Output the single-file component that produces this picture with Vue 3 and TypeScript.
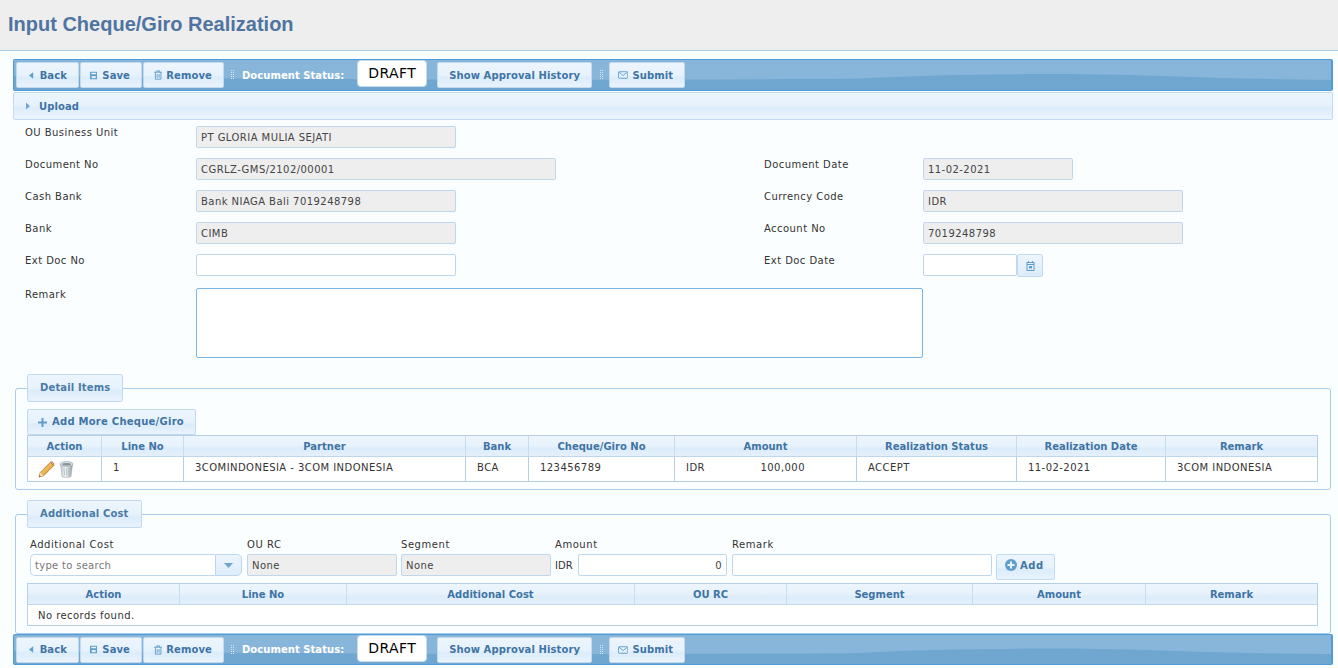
<script setup lang="ts">
const leftFields = [
  { label: 'OU Business Unit', value: 'PT GLORIA MULIA SEJATI', cls: 'w260', rightLabel: '', rightValue: '', rightCls: '' },
  { label: 'Document No', value: 'CGRLZ-GMS/2102/00001', cls: 'w360', rightLabel: 'Document Date', rightValue: '11-02-2021', rightCls: 'w150' },
  { label: 'Cash Bank', value: 'Bank NIAGA Bali 7019248798', cls: 'w260', rightLabel: 'Currency Code', rightValue: 'IDR', rightCls: 'w260' },
  { label: 'Bank', value: 'CIMB', cls: 'w260', rightLabel: 'Account No', rightValue: '7019248798', rightCls: 'w260' },
]
const detailCols = [
  { t: 'Action', w: 74 }, { t: 'Line No', w: 82 }, { t: 'Partner', w: 282 }, { t: 'Bank', w: 63 },
  { t: 'Cheque/Giro No', w: 146 }, { t: 'Amount', w: 182 }, { t: 'Realization Status', w: 160 },
  { t: 'Realization Date', w: 149 }, { t: 'Remark', w: 151 },
]
const costCols = [
  { t: 'Action', w: 152 }, { t: 'Line No', w: 167 }, { t: 'Additional Cost', w: 288 }, { t: 'OU RC', w: 152 },
  { t: 'Segment', w: 186 }, { t: 'Amount', w: 173 }, { t: 'Remark', w: 171 },
]
const toolbars = ['top', 'bottom']
</script>

<template>
  <div class="page">
    <header class="title-bar"><h1>Input Cheque/Giro Realization</h1></header>
    <main class="main">
      <template v-for="bar in toolbars" :key="bar">
        <div v-if="bar === 'bottom'" class="content">
          <div class="panel">
            <svg width="6" height="8" viewBox="0 0 6 8"><path d="M1 0.5 5 4 1 7.5z" fill="#6fa6d0" /></svg>
            <span>Upload</span>
          </div>
          <div class="form">
            <template v-for="f in leftFields" :key="f.label">
              <label>{{ f.label }}</label>
              <div><div class="input ro" :class="f.cls">{{ f.value }}</div></div>
              <label>{{ f.rightLabel }}</label>
              <div><div v-if="f.rightValue" class="input ro" :class="f.rightCls">{{ f.rightValue }}</div></div>
            </template>
            <label>Ext Doc No</label>
            <div><div class="input w260"></div></div>
            <label>Ext Doc Date</label>
            <div class="date">
              <div class="input w94"></div>
              <button class="cal" type="button">
                <svg width="9" height="10" viewBox="0 0 9 10" fill="none" stroke="#5f9dcb">
                  <rect x="1" y="1.500" width="7" height="8" />
                  <path d="M2.500 0v2M6.500 0v2M1 3.500h7" />
                  <rect x="3" y="5" width="3" height="2.500" fill="#5f9dcb" stroke="none" />
                </svg>
              </button>
            </div>
            <label class="remark-label">Remark</label>
            <div class="remark-wrap"><div class="textarea"></div></div>
          </div>

          <fieldset class="group first">
            <legend>Detail Items</legend>
            <button class="btn add-more" type="button">
              <svg width="9" height="9" viewBox="0 0 9 9"><path d="M3.500 0h2v3.500H9v2H5.500V9h-2V5.500H0v-2h3.500z" fill="#5f9dcb" /></svg>
              <span>Add More Cheque/Giro</span>
            </button>
            <table class="grid">
              <colgroup><col v-for="c in detailCols" :key="c.t" :style="{ width: c.w + 'px' }" /></colgroup>
              <thead><tr><th v-for="c in detailCols" :key="c.t">{{ c.t }}</th></tr></thead>
              <tbody>
                <tr class="line">
                  <td class="actions">
                    <svg width="17" height="17" viewBox="0 0 17 17">
                      <defs>
                        <linearGradient id="pen" x1="0" y1="0" x2="1" y2="1">
                          <stop offset="0" stop-color="#fbe08a" />
                          <stop offset="1" stop-color="#d98a1e" />
                        </linearGradient>
                      </defs>
                      <path d="M12.500 1.200 15.800 4.500 5.600 14.700 1 16l1.300-4.600z" fill="url(#pen)" stroke="#a9701c" stroke-width=".8" />
                      <path d="M12.500 1.200c1-.8 1.800-.6 2.500.1s.9 1.600.8 3.200z" fill="#e8a0a0" stroke="#a9701c" stroke-width=".6" />
                      <path d="M2.300 11.400 5.600 14.700 1 16z" fill="#f3dcb8" />
                      <path d="M1 16l.5-1.800 1.300 1.300z" fill="#5a4020" />
                    </svg>
                    <svg width="15" height="17" viewBox="0 0 15 17">
                      <defs>
                        <linearGradient id="can" x1="0" y1="0" x2="1" y2="0">
                          <stop offset="0" stop-color="#c3ccd1" />
                          <stop offset=".45" stop-color="#f0f3f4" />
                          <stop offset="1" stop-color="#8e9aa1" />
                        </linearGradient>
                      </defs>
                      <path d="M1.500 3.500 3 15.500c1.500 1.200 7.500 1.200 9 0l1.500-12z" fill="url(#can)" stroke="#a5b0b6" stroke-width=".6" />
                      <ellipse cx="7.500" cy="3" rx="6.500" ry="2.400" fill="#dfe5e8" stroke="#9aa6ad" stroke-width=".7" />
                      <ellipse cx="7.500" cy="3.200" rx="4.500" ry="1.300" fill="#87939a" />
                      <path d="M5 7l.6 7M7.500 7v7.500M10 7l-.6 7" stroke="#a9b4ba" stroke-width=".7" />
                    </svg>
                  </td>
                  <td>1</td>
                  <td>3COMINDONESIA - 3COM INDONESIA</td>
                  <td>BCA</td>
                  <td>123456789</td>
                  <td><span class="money"><span>IDR</span><span>100,000</span></span></td>
                  <td>ACCEPT</td>
                  <td>11-02-2021</td>
                  <td>3COM INDONESIA</td>
                </tr>
              </tbody>
            </table>
          </fieldset>

          <fieldset class="group second">
            <legend>Additional Cost</legend>
            <div class="cost-form">
              <div class="cell">
                <span class="cap">Additional Cost</span>
                <div class="combo">
                  <div class="combo-input">type to search</div>
                  <button class="combo-btn" type="button">
                    <svg width="9" height="5" viewBox="0 0 9 5"><path d="M0 0h9L4.500 5z" fill="#6fa6d0" /></svg>
                  </button>
                </div>
              </div>
              <div class="cell"><span class="cap">OU RC</span><div class="input ro full">None</div></div>
              <div class="cell"><span class="cap">Segment</span><div class="input ro full">None</div></div>
              <div class="cell">
                <span class="cap">Amount</span>
                <div class="amount"><span>IDR</span><div class="input num">0</div></div>
              </div>
              <div class="cell"><span class="cap">Remark</span><div class="input full"></div></div>
              <div class="cell add-cell">
                <button class="btn add" type="button">
                  <svg width="12" height="12" viewBox="0 0 12 12">
                    <circle cx="6" cy="6" r="6" fill="#5f9fce" />
                    <path d="M5 2.500h2V5h2.500v2H7v2.500H5V7H2.500V5H5z" fill="#eaf4fd" />
                  </svg>
                  Add
                </button>
              </div>
            </div>
            <table class="grid">
              <colgroup><col v-for="c in costCols" :key="c.t" :style="{ width: c.w + 'px' }" /></colgroup>
              <thead><tr><th v-for="c in costCols" :key="c.t">{{ c.t }}</th></tr></thead>
              <tbody><tr class="empty"><td :colspan="costCols.length">No records found.</td></tr></tbody>
            </table>
          </fieldset>
        </div>

        <div class="toolbar" :class="bar">
          <svg class="wave" viewBox="0 0 1320 32" preserveAspectRatio="none">
            <path d="M0 17C300 21 560 22 840 20 950 14 1050 14 1150 17 1230 20 1290 21 1320 21V32H0z" fill="#6fa7d1" />
          </svg>
          <button class="btn b-back" type="button">
            <svg width="5" height="7" viewBox="0 0 5 7"><path d="M4.500 0v7L0 3.500z" fill="#5f9dcb" /></svg>
            Back
          </button>
          <button class="btn b-save" type="button">
            <svg width="9" height="9" viewBox="0 0 9 9" fill="#5f9dcb">
              <path d="M0 0h9v9H0zM1.500 1v2h6V1zM2 5v3h5V5z" fill-rule="evenodd" />
            </svg>
            Save
          </button>
          <button class="btn b-remove" type="button">
            <svg width="9" height="10" viewBox="0 0 9 10" fill="none" stroke="#5f9dcb">
              <path d="M0 2h9M3 2V.5h3V2M1.500 2v7.500h6V2M3.500 4v4M5.500 4v4" />
            </svg>
            Remove
          </button>
          <span class="grip first-grip"></span>
          <span class="status-label">Document Status:</span>
          <span class="status">DRAFT</span>
          <button class="btn history" type="button">Show Approval History</button>
          <span class="grip second-grip"></span>
          <button class="btn b-submit" type="button">
            <svg width="11" height="8" viewBox="0 0 11 8" fill="none" stroke="#5f9dcb">
              <rect x=".5" y=".5" width="10" height="7" rx="1" />
              <path d="M1 1l4.500 3.500L10 1" />
            </svg>
            Submit
          </button>
        </div>
      </template>
    </main>
  </div>
</template>

<style>
html, body { margin: 0; background: #fbfefe; overflow: hidden; }
</style>

<style scoped>
.page { font-family: "DejaVu Sans", Verdana, sans-serif; font-size: 10px; letter-spacing: .45px; color: #333; }
.title-bar { height: 50px; background: #eeeeee; border-bottom: 1px solid #a9cde9; display: flex; align-items: center; padding-left: 8px; }
h1 { margin: 0 0 1px; font: bold 20px "Liberation Sans", Arial, sans-serif; letter-spacing: 0; color: #4f74a1; }
.main { padding: 8px 5px 0 13px; }
.toolbar { position: relative; height: 32px; box-sizing: border-box; display: flex; align-items: center; padding: 0 0 0 2px; gap: 1px;
  background: #88b6da; border: 1px solid #4d9bd8; border-width: 1px 2px 1px 1px; border-radius: 2px; }
.toolbar.top { margin-bottom: 1px; }
.toolbar.bottom { height: 31px; }
.wave { position: absolute; inset: 0; width: 100%; height: 100%; }
.btn { position: relative; height: 26px; box-sizing: border-box; padding: 0 11px; display: inline-flex; align-items: center; gap: 6px;
  font: bold 10px "DejaVu Sans", Verdana, sans-serif; letter-spacing: .1px; color: #3f74a5;
  background: linear-gradient(#edf5fd 0, #e7f2fc 50%, #dcecfa 62%, #e9f3fd 100%); border: 1px solid #c2daef; border-radius: 2px; }
.b-back { width: 63px; padding-left: 12px; }
.b-save { width: 62px; padding-left: 9px; gap: 5px; }
.b-remove { width: 81px; padding-left: 10px; gap: 4px; }
.history { width: 155px; }
.b-submit { width: 76px; padding-left: 8px; gap: 4px; }
.grip { position: relative; width: 3px; height: 10px; background: #d4e6f5;
  -webkit-mask-image: linear-gradient(#000 50%, transparent 50%), linear-gradient(90deg, #000 1px, transparent 1px);
  -webkit-mask-size: 100% 2px, 2px 100%;
  -webkit-mask-composite: source-in;
  mask-image: linear-gradient(#000 50%, transparent 50%), linear-gradient(90deg, #000 1px, transparent 1px);
  mask-size: 100% 2px, 2px 100%;
  mask-composite: intersect; }
.first-grip { margin: 0 7px 0 6px; }
.status-label { position: relative; font-weight: bold; letter-spacing: .05px; color: #fff; }
.status { position: relative; box-sizing: border-box; width: 70px; height: 27px; margin: -3px 9px 0 12px; padding-bottom: 1px; background: #fff; border: 1px solid #c9dcec; border-radius: 4px;
  display: flex; align-items: center; justify-content: center; font-size: 14px; letter-spacing: .4px; color: #000; }
.second-grip { margin: 0 5px 0 7px; }
.panel { height: 28px; box-sizing: border-box; display: flex; align-items: center; gap: 8px; padding-left: 11px; font-weight: bold; letter-spacing: .1px; color: #3f74a5;
  background: linear-gradient(#eaf4fd 0, #e7f2fc 50%, #dcecfb 55%, #ecf5fd 100%); border: 1px solid #c2daef; border-radius: 2px; }
.form { display: grid; grid-template-columns: 171px 568px 159px 1fr; grid-template-rows: repeat(5, 22px) 72px; row-gap: 10px; margin: 6px 0 0 12px; }
label { padding-top: 1px; line-height: 12px; color: #333; }
.input { box-sizing: border-box; height: 22px; line-height: 22px; padding: 0 4px; background: #fff; border: 1px solid #bfd7ec; border-radius: 2px; color: #444; }
.ro { background: #eeeeee; }
.w260 { width: 260px; } .w360 { width: 360px; } .w150 { width: 150px; } .w94 { width: 94px; }
.full { width: 100%; }
.date { display: flex; }
.cal { box-sizing: border-box; width: 26px; height: 23px; padding: 0; display: flex; align-items: center; justify-content: center;
  background: linear-gradient(#edf5fd, #dcecfa); border: 1px solid #c2daef; border-radius: 2px; }
.remark-label { margin-top: 2px; }
.remark-wrap { grid-column: 2 / span 3; margin-top: 2px; height: 70px; }
.textarea { box-sizing: border-box; width: 727px; height: 70px; background: #fff; border: 1px solid #79b5e6; border-radius: 2px; }
.group { margin: 0 2px; padding: 0 12px 7px 11px; min-width: 0; border: 1px solid #a9cde9; border-radius: 3px; }
.group.first { margin-top: 16px; }
.group.second { margin-top: 10px; padding-bottom: 7px; }
legend { height: 28px; box-sizing: border-box; padding: 0 12px; line-height: 26px; font-weight: bold; letter-spacing: .15px; color: #4a7aa8;
  background: linear-gradient(#edf5fd 0, #e7f2fc 50%, #dcecfa 62%, #e9f3fd 100%); border: 1px solid #c2daef; border-radius: 2px; }
.add-more { display: flex; margin-top: 7px; padding: 0 11px 0 10px; gap: 5px; letter-spacing: .25px; }
.add-more span { margin-top: -2px; }
.grid { width: 1291px; table-layout: fixed; border-collapse: separate; border-spacing: 0; border: 1px solid #b4cfe6; box-sizing: border-box; }
th { height: 21px; box-sizing: border-box; padding: 0; font-weight: bold; letter-spacing: 0; text-align: center; color: #3f74a5; border-right: 1px solid #c6dcf0; border-bottom: 1px solid #bfd7ec;
  background: linear-gradient(#edf5fd 0, #e7f2fc 50%, #dcecfa 62%, #e4f0fb 100%); }
th:last-child { border-right: 0; }
td { box-sizing: border-box; padding: 0 0 3px 11px; background: #fff; border-right: 1px solid #b4cfe6; color: #333; white-space: nowrap; }
td:last-child { border-right: 0; }
.line td { height: 24px; }
.actions { padding: 0 0 0 10px; }
.actions svg { vertical-align: middle; }
.actions svg + svg { margin-left: 4px; }
.money { display: inline-flex; justify-content: space-between; width: 119px; }
.empty td { height: 20px; padding: 0 0 0 10px; }
.cost-form { display: grid; grid-template-columns: 213px 150px 150px 173px 260px 59px; column-gap: 4px; margin: 9px 0 3px 3px; }
.cell { display: flex; flex-direction: column; min-width: 0; }
.cap { height: 17px; line-height: 16px; letter-spacing: .55px; color: #333; }
.combo { display: flex; width: 212px; }
.combo-input { box-sizing: border-box; flex: 1; height: 22px; line-height: 22px; padding: 0 4px; letter-spacing: .3px; background: #fff; border: 1px solid #bfd7ec; border-right: 0; border-radius: 5px 0 0 5px; color: #777; }
.combo-btn { box-sizing: border-box; width: 27px; height: 22px; padding: 0; display: flex; align-items: center; justify-content: center; background: linear-gradient(#edf5fd, #dcecfa); border: 1px solid #bfd7ec; border-radius: 0 5px 5px 0; }
.amount { display: flex; align-items: center; gap: 1px; width: 172px; }
.amount span { width: 22px; letter-spacing: 0; }
.num { flex: 1; text-align: right; }
.add-cell { justify-content: flex-start; padding-top: 17px; }
.add { width: 59px; padding: 0 0 4px 8px; gap: 3px; letter-spacing: .5px; }
</style>
